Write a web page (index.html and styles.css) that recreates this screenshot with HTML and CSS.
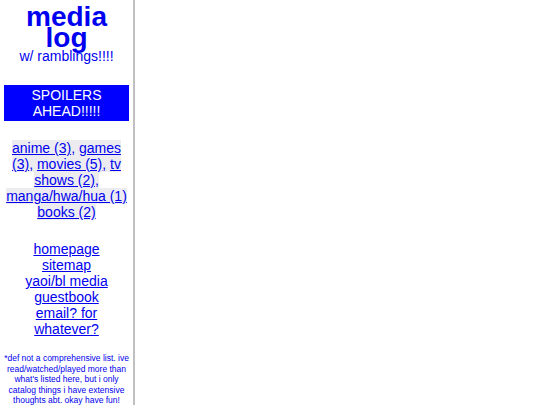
FILE: index.html
```html
<!DOCTYPE html>
<html>
<head>
<meta charset="utf-8">
<title>media log</title>
<link rel="stylesheet" href="styles.css">
</head>
<body>
<div class="layout">
  <aside class="sidebar">
    <h1 class="title">media log</h1>
    <p class="tagline">w/ ramblings!!!!</p>
    <div class="spoiler">SPOILERS AHEAD!!!!!</div>
    <p class="cats"><span class="hl"><a href="#">anime (3)</a>, <a href="#">games (3)</a>, <a href="#">movies (5)</a>, <a href="#">tv shows (2)</a>, <a href="#">manga/hwa/hua (1)</a> <a href="#">books (2)</a></span></p>
    <nav class="links">
      <a href="#">homepage</a>
      <a href="#">sitemap</a>
      <a href="#">yaoi/bl media</a>
      <a href="#">guestbook</a>
      <a href="#">email? for whatever?</a>
    </nav>
    <p class="note">*def not a comprehensive list. ive read/watched/played more than what's listed here, but i only catalog things i have extensive thoughts abt. okay have fun!</p>
  </aside>
  <main class="content"></main>
</div>
</body>
</html>
```
FILE: styles.css
```css
html, body {
  margin: 0;
  padding: 0;
  background: #ffffff;
}
body {
  font-family: "Liberation Sans", Arial, sans-serif;
  color: #0000ee;
}
.layout {
  display: flex;
  height: 100vh;
}
.sidebar {
  width: 125px;
  flex: none;
  padding: 6px 4px 0 4px;
  border-right: 2px solid #c0c0c0;
  text-align: center;
  overflow: hidden;
}
.content {
  flex: 1;
}
.title {
  margin: 0;
  font-size: 28px;
  line-height: 21px;
  font-weight: bold;
  color: #0000f0;
}
.tagline {
  margin: 0;
  font-size: 14px;
  line-height: 16px;
  color: #0000f0;
}
.spoiler {
  margin-top: 21px;
  background: #0000ff;
  color: #ffffff;
  font-size: 14px;
  line-height: 16px;
  padding: 2px 0;
}
.cats {
  margin: 19px 0 0 0;
  font-size: 14px;
  line-height: 16px;
}
.hl {
  background: #ececf0;
}
a {
  color: #0000ee;
  text-decoration: underline;
}
.links {
  margin-top: 21px;
  display: flex;
  flex-direction: column;
  align-items: center;
  font-size: 14px;
  line-height: 16px;
}
.note {
  margin: 16px 0 0 0;
  font-size: 8.5px;
  line-height: 10.5px;
  color: #0000ee;
}
```
